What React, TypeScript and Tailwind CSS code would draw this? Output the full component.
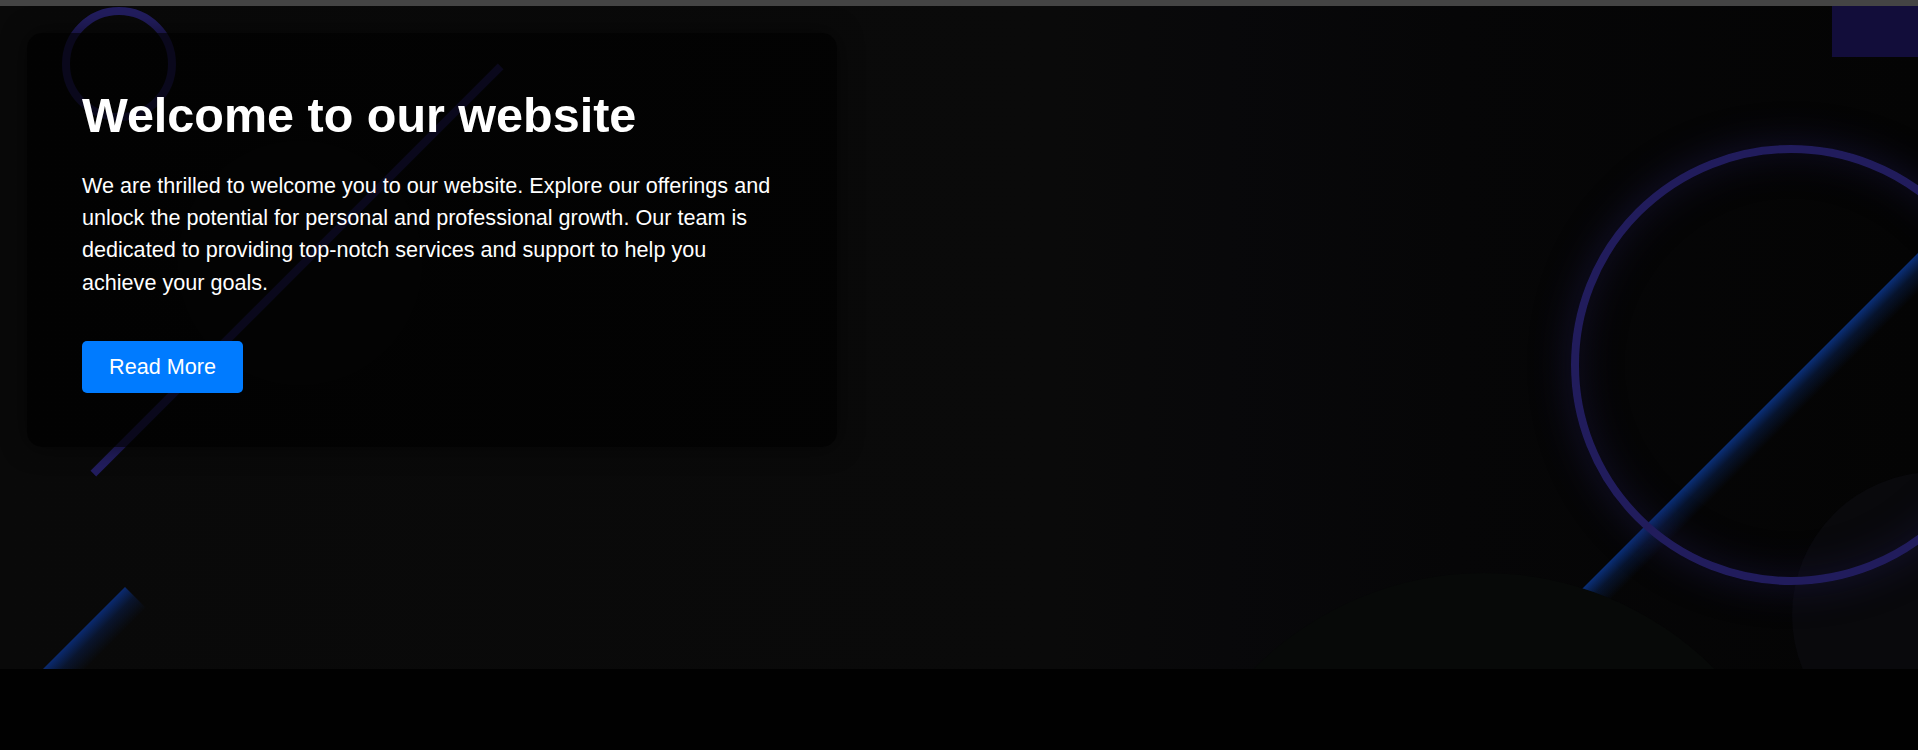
import React from "react";

export default function App() {
  return (
    <div className="w-full min-h-[750px] bg-[#010101] font-['Liberation_Sans',Arial,sans-serif]">
      <div className="h-[6px] bg-[#444444]" />
      <section className="relative h-[663px] overflow-hidden bg-[linear-gradient(90deg,#090909_0%,#0a0a0a_55%,#08080a_64%,#060607_76%,#040404_100%)] pl-[27px] pt-[27px]">
        {/* top-right rectangle */}
        <div className="absolute left-[1832px] top-0 h-[51px] w-[86px] bg-[#120d3a]" />
        {/* faint circle behind card */}
        <div className="absolute left-[178px] top-[135px] h-[244px] w-[244px] rounded-full bg-[#0c0d0c]" />
        {/* top-left ring */}
        <div className="absolute left-[62px] top-[1px] h-[114px] w-[114px] rounded-full border-[8px] border-[#221d5e]" />
        {/* top-left diagonal line */}
        <div className="absolute left-[9px] top-[260px] h-[8px] w-[576px] -rotate-45 bg-[#221d5e]" />
        {/* bottom-left blue bar */}
        <div className="absolute left-[125px] top-[581px] h-[200px] w-[30px] origin-top-left rotate-45 bg-[linear-gradient(90deg,#0a2a70_0%,rgba(10,42,112,0.35)_45%,rgba(10,42,112,0)_100%)]" />
        {/* bottom-right faint circle */}
        <div className="absolute left-[1792px] top-[466px] h-[286px] w-[286px] rounded-full bg-[#09090c]" />
        {/* right blue bar */}
        <div className="absolute left-[2068px] top-[97px] h-[850px] w-[28px] origin-top-left rotate-45 bg-[linear-gradient(90deg,#0a2f78_0%,rgba(10,47,120,0.35)_45%,rgba(10,47,120,0)_100%)]" />
        {/* right ring with glow */}
        <div className="absolute left-[1571px] top-[139px] h-[440px] w-[440px] rounded-full border-[8px] border-[#211c5c] shadow-[0_0_40px_rgba(33,28,92,0.45),inset_0_0_40px_rgba(33,28,92,0.35)]" />
        {/* bottom semicircle */}
        <div className="absolute left-[1159px] top-[567px] h-[650px] w-[650px] rounded-full bg-[#070908]" />

        {/* card */}
        <div className="relative z-10 w-[810px] rounded-[15px] bg-black/70 px-[55px] py-[54px] shadow-[0_0_24px_rgba(0,0,0,0.55)]">
          <h1 className="mb-[25px] text-[48.5px] font-bold leading-[1.19] text-white">
            Welcome to our website
          </h1>
          <p className="mb-[42px] text-[21.6px] leading-[1.5] text-white">
            We are thrilled to welcome you to our website. Explore our offerings and unlock the potential for personal and professional growth. Our team is dedicated to providing top-notch services and support to help you achieve your goals.
          </p>
          <button className="flex h-[52px] w-[161px] items-center justify-center rounded-[5px] bg-[#007bff] text-[21.6px] text-white">
            Read More
          </button>
        </div>
      </section>
      <div className="h-[81px] bg-[#010101]" />
    </div>
  );
}
